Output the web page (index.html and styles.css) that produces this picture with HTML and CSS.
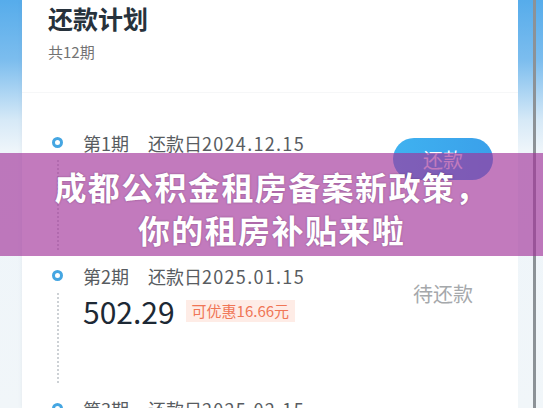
FILE: index.html
```html
<!DOCTYPE html>
<html lang="zh-CN">
<head>
    <meta charset="UTF-8">
    <meta name="viewport" content="width=device-width, initial-scale=1.0">
    <title>还款计划</title>
    <link rel="stylesheet" href="styles.css">
</head>
<body>
    <div class="page">
        <div class="side side-left"></div>
        <main class="card">
            <header class="plan-head">
                <h1>还款计划</h1>
                <p class="plan-count">共12期</p>
            </header>
            <ul class="plan-list">
                <li class="plan-row">
                    <div class="timeline"><span class="dot"></span><span class="dash"></span></div>
                    <div class="info">
                        <div class="info-text">
                            <div class="due"><span class="term">第1期</span>还款日<span class="date">2024.12.15</span></div>
                        </div>
                        <div class="action"><button class="pay-btn">还款</button></div>
                    </div>
                </li>
                <li class="plan-row">
                    <div class="timeline"><span class="dot"></span><span class="dash"></span></div>
                    <div class="info">
                        <div class="info-text">
                            <div class="due"><span class="term">第2期</span>还款日<span class="date">2025.01.15</span></div>
                            <div class="amount-line"><span class="amount">502.29</span><span class="discount">可优惠16.66元</span></div>
                        </div>
                        <div class="action"><span class="status">待还款</span></div>
                    </div>
                </li>
                <li class="plan-row">
                    <div class="timeline"><span class="dot"></span><span class="dash"></span></div>
                    <div class="info">
                        <div class="info-text">
                            <div class="due"><span class="term">第3期</span>还款日<span class="date">2025.02.15</span></div>
                            <div class="amount-line"><span class="amount">502.29</span><span class="discount">可优惠16.66元</span></div>
                        </div>
                        <div class="action"><span class="status">待还款</span></div>
                    </div>
                </li>
            </ul>
        </main>
        <div class="side side-right"></div>

        <!-- headline band over the screenshot -->
        <div class="banner">
            <p>成都公积金租房备案新政策，</p>
            <p>你的租房补贴来啦</p>
        </div>
    </div>
</body>
</html>
```

FILE: styles.css
```css
/* Basic styles */
body {
    margin: 0;
    padding: 0;
    font-family: "Noto Sans CJK SC", "Noto Sans", sans-serif;
    background-color: #eff5f9;
}
.page {
    position: relative;
    display: flex;
    width: 543px;
    height: 408px;
    overflow: hidden;
}
.side {
    background: linear-gradient(180deg, #56aceb 0px, #7cbdee 60px, #d6e9f7 120px, #eef5fa 150px, #f1f6f9 100%);
}
.side-left {
    width: 22px;
}
.side-right {
    width: 25px;
    position: relative;
}
.side-right::after {
    content: "";
    position: absolute;
    top: 0;
    bottom: 0;
    left: 15px;
    width: 3px;
    background-color: #8c9297;
}
.card {
    flex: 1;
    background-color: #fff;
    box-shadow: 0 0 4px rgba(120, 140, 160, 0.12);
}

/* header */
.plan-head {
    padding: 0 26px;
    height: 92px;
    border-bottom: 1px solid #f6f7f8;
}
.plan-head h1 {
    margin: 0;
    font-size: 25px;
    line-height: 36px;
    font-weight: bold;
    color: #27323c;
}
.plan-head .plan-count {
    margin: 5px 0 0;
    font-size: 15px;
    line-height: 22px;
    color: #737373;
}

/* instalments */
.plan-list {
    list-style: none;
    margin: 0;
    padding: 38px 25px 0 25px;
}
.plan-row {
    display: flex;
    height: 133px;
}
.timeline {
    width: 21px;
    display: flex;
    flex-direction: column;
    align-items: center;
}
.dot {
    width: 11px;
    height: 11px;
    box-sizing: border-box;
    border: 3px solid #45a6e2;
    border-radius: 50%;
    margin-top: 6px;
}
.dash {
    width: 0;
    height: 90px;
    margin-top: 12px;
    border-left: 2px dotted #cdd1d5;
}
.info {
    flex: 1;
    display: flex;
    justify-content: space-between;
    align-items: flex-start;
    margin-left: 15px;
}
.due {
    font-size: 18px;
    line-height: 24px;
    color: #585c61;
}
.term {
    margin-right: 19px;
}
.date {
    letter-spacing: 1.3px;
}
.amount-line {
    display: flex;
    align-items: center;
    margin-top: 4px;
}
.amount {
    font-size: 30px;
    line-height: 38px;
    color: #1d2935;
}
.discount {
    margin-left: 11px;
    padding: 0 6px;
    font-size: 15px;
    line-height: 22px;
    color: #f07656;
    background-color: #feece6;
}
.action {
    width: 100px;
    text-align: center;
}
.pay-btn {
    margin-top: 7px;
    width: 100px;
    height: 42px;
    border: none;
    border-radius: 21px;
    background: linear-gradient(90deg, #3fb2f0, #3aa0ea);
    color: #fff;
    font-family: inherit;
    font-size: 20px;
}
.status {
    display: block;
    margin-top: 18px;
    font-size: 20px;
    line-height: 24px;
    color: #a5a8ab;
}

/* headline band */
.banner {
    position: absolute;
    left: 0;
    top: 153px;
    width: 100%;
    height: 103px;
    box-sizing: border-box;
    padding-top: 12px;
    background-color: rgba(161, 51, 154, 0.65);
    text-align: center;
}
.banner p {
    margin: 0;
    font-size: 32px;
    line-height: 43px;
    font-weight: bold;
    letter-spacing: 1.4px;
    color: #fff;
    text-shadow: 0 0 2px rgba(60, 20, 60, 0.45);
}
```
